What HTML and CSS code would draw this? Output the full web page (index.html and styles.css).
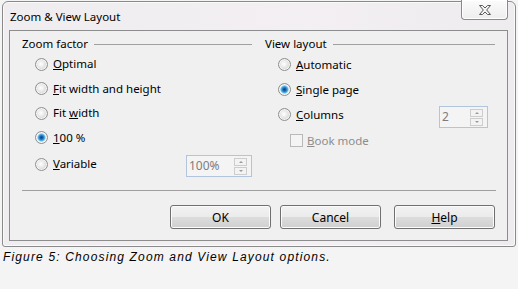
FILE: index.html
```html
<!DOCTYPE html>
<html lang="en">
<head>
    <meta charset="UTF-8">
    <title>Zoom &amp; View Layout</title>
    <link rel="stylesheet" href="styles.css">
</head>
<body>
    <div class="window">
        <div class="titlebar">
            <span class="title">Zoom &amp; View Layout</span>
            <button class="close" aria-label="Close">
                <svg width="12" height="10" viewBox="0 0 12 10">
                    <polygon points="0.5,0.5 3.5,0.5 6,3 8.5,0.5 11.5,0.5 7.7,5 11.5,9.5 8.5,9.5 6,7 3.5,9.5 0.5,9.5 4.3,5" fill="#f4f4f4" stroke="#5a5a5a" stroke-width="1"/>
                </svg>
            </button>
        </div>

        <div class="client">
            <div class="columns">
                <div class="group group-zoom">
                    <div class="heading">Zoom factor</div>
                    <label class="opt"><input type="radio" name="zoom" class="radio"><span><u>O</u>ptimal</span></label>
                    <label class="opt"><input type="radio" name="zoom" class="radio"><span><u>F</u>it width and height</span></label>
                    <label class="opt"><input type="radio" name="zoom" class="radio"><span>Fit <u>w</u>idth</span></label>
                    <label class="opt"><input type="radio" name="zoom" class="radio" checked><span><u>1</u>00 %</span></label>
                    <label class="opt opt-variable">
                        <input type="radio" name="zoom" class="radio"><span><u>V</u>ariable</span>
                        <span class="spin spin-variable">
                            <span class="spin-value">100%</span>
                            <span class="spin-buttons"><span class="arrow up"></span><span class="arrow down"></span></span>
                        </span>
                    </label>
                </div>

                <div class="group group-view">
                    <div class="heading">View layout</div>
                    <label class="opt"><input type="radio" name="view" class="radio"><span><u>A</u>utomatic</span></label>
                    <label class="opt"><input type="radio" name="view" class="radio" checked><span><u>S</u>ingle page</span></label>
                    <label class="opt">
                        <input type="radio" name="view" class="radio"><span><u>C</u>olumns</span>
                        <span class="spin spin-columns">
                            <span class="spin-value">2</span>
                            <span class="spin-buttons"><span class="arrow up"></span><span class="arrow down"></span></span>
                        </span>
                    </label>
                    <label class="opt opt-book disabled"><input type="checkbox" class="check" disabled><span><u>B</u>ook mode</span></label>
                </div>
            </div>

            <div class="separator"></div>

            <div class="buttons">
                <button class="btn">OK</button>
                <button class="btn">Cancel</button>
                <button class="btn btn-help"><u>H</u>elp</button>
            </div>
        </div>
    </div>

    <p class="caption">Figure 5: Choosing Zoom and View Layout options.</p>
</body>
</html>
```

FILE: styles.css
```css
body {
    margin: 0;
    background-color: #f4f4f4;
    font-family: "Noto Sans", "Open Sans", sans-serif;
    font-size: 11.5px;
    color: #000;
}
.window {
    box-sizing: border-box;
    width: 514px;
    height: 246px;
    margin: 1px 0 0 2px;
    padding: 0 7px 5px 6px;
    border: 1px solid #8a8a8a;
    border-radius: 6px 6px 3px 3px;
    background: linear-gradient(90deg, #efedf0, #f3eff3 60%, #eeecef);
    box-shadow: inset 0 0 0 1px #fafafa;
}
.titlebar {
    display: flex;
    align-items: flex-start;
    height: 28px;
}
.title {
    margin: 7px 0 0 1px;
    line-height: 16px;
}
.close {
    display: flex;
    align-items: center;
    justify-content: center;
    width: 47px;
    height: 20px;
    margin: -2px 0 0 auto;
    padding: 0;
    border: 1px solid #8a8a8a;
    border-top: none;
    border-radius: 0 0 4px 4px;
    background: linear-gradient(#fbfbfb, #eeeeee);
    box-shadow: inset 0 0 0 1px #ffffff;
}
.client {
    box-sizing: border-box;
    height: 211px;
    padding: 5px 11px 0 12px;
    border: 1px solid #8d8d8d;
    background-color: #f0f0f0;
}
.columns {
    display: grid;
    grid-template-columns: 230px 230px;
    column-gap: 13px;
}
.heading {
    display: flex;
    align-items: center;
    height: 16px;
    line-height: 16px;
}
.heading::after {
    content: "";
    flex: 1;
    margin: 1px 0 0 6px;
    border-top: 1px solid #a0a0a0;
}
.opt {
    display: flex;
    align-items: center;
    gap: 5px;
    padding-left: 13px;
    height: 24.5px;
    line-height: 16px;
}
.group-view .opt {
    height: 25px;
}
.opt-variable {
    height: 28px;
}
.radio {
    appearance: none;
    box-sizing: border-box;
    width: 13px;
    height: 13px;
    margin: 0;
    border: 1px solid #8f8f8f;
    border-radius: 50%;
    background: radial-gradient(circle at 45% 45%, #ffffff 0, #ececec 3px, #d4d4d4 6px);
    box-shadow: inset 0 0 0 1px #f6f6f6;
}
.radio:checked {
    background: radial-gradient(circle at 50% 50%, #0c3f7a 0, #1d66ad 1.5px, #4aa6e0 3px, #9adcf8 4px, #f2f2f2 4.6px, #dadada 6px);
}
.check {
    appearance: none;
    box-sizing: border-box;
    width: 13px;
    height: 13px;
    margin: 0;
    border: 1px solid #b9b9b9;
    background-color: #f4f4f4;
}
.opt-book {
    padding-left: 25px;
    margin-top: 1px;
    gap: 4px;
}
.disabled {
    color: #8d8d8d;
}
.spin {
    box-sizing: border-box;
    display: flex;
    align-items: center;
    height: 22px;
    margin-left: auto;
    padding: 0 4px 0 2px;
    border: 1px solid #b3c5dc;
    background-color: #f4f4f4;
    color: #7d7d7d;
    font-size: 12px;
}
.spin-variable {
    width: 66px;
    margin-top: 4px;
}
.spin-columns {
    width: 49px;
    margin-top: 5px;
    margin-right: 7px;
}
.spin-value {
    flex: 1;
}
.spin-buttons {
    display: flex;
    flex-direction: column;
    gap: 1px;
}
.arrow {
    box-sizing: border-box;
    display: flex;
    align-items: center;
    justify-content: center;
    width: 13px;
    height: 8px;
    border: 1px solid #cdcdcd;
    background-color: #f3f3f3;
}
.arrow::before {
    content: "";
    border-left: 2px solid transparent;
    border-right: 2px solid transparent;
}
.up::before {
    border-bottom: 2px solid #9a9a9a;
}
.down::before {
    border-top: 2px solid #9a9a9a;
}
.separator {
    margin-top: 12px;
    border-top: 1px solid #a0a0a0;
}
.buttons {
    display: flex;
    justify-content: flex-end;
    margin: 14px 1px 0 0;
}
.btn {
    box-sizing: border-box;
    width: 101px;
    height: 24px;
    margin-left: 9px;
    padding: 0;
    border: 1px solid #707070;
    border-radius: 3px;
    background: linear-gradient(#f2f2f2 0%, #ebebeb 50%, #dddddd 50%, #cfcfcf 100%);
    box-shadow: inset 0 0 0 1px #fbfbfb;
    font-family: inherit;
    font-size: 12px;
    color: #000;
}
.btn-help {
    margin-left: 13px;
}
.caption {
    margin: 3px 0 0 3px;
    font-family: "Liberation Sans", Arial, sans-serif;
    font-style: italic;
    font-size: 12px;
    line-height: 14px;
    letter-spacing: 1.15px;
    color: #000;
}
```
